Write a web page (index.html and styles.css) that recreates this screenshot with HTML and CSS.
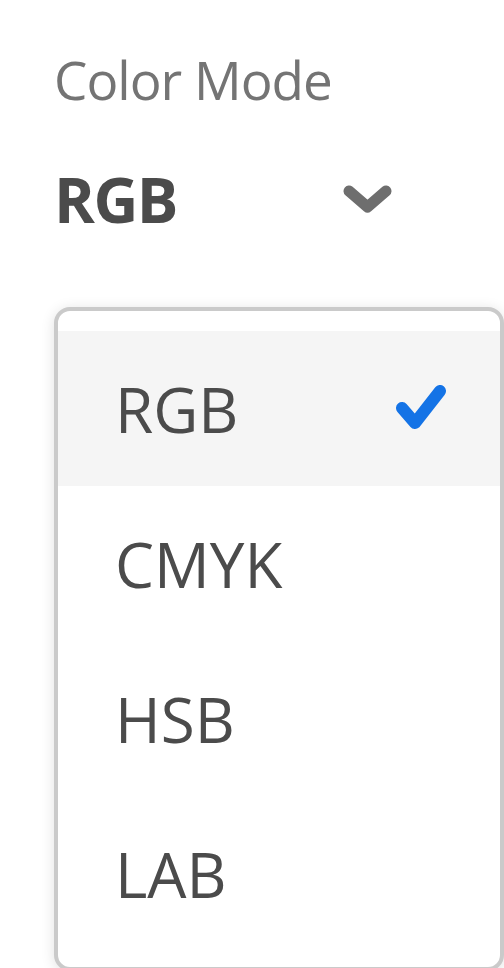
FILE: index.html
```html
<!DOCTYPE html>
<html lang="en">
<head>
<meta charset="utf-8">
<title>Color Mode</title>
<link rel="stylesheet" href="styles.css">
</head>
<body>
<div class="field">
  <div class="label">Color Mode</div>
  <div class="picker">
    <span class="picker-value">RGB</span>
    <svg class="chevron" width="49" height="28" viewBox="0 0 49 28" aria-hidden="true">
      <path d="M6 6 L24.5 22 L43 6" fill="none" stroke="#6e6e6e" stroke-width="11" stroke-linecap="round" stroke-linejoin="round"/>
    </svg>
  </div>
  <div class="popover">
    <ul class="menu">
      <li class="item selected">
        <span class="item-label">RGB</span>
        <svg class="check" width="50" height="48" viewBox="0 0 50 48" aria-hidden="true">
          <path d="M6 23 L19 38 L44 6" fill="none" stroke="#1473e6" stroke-width="12" stroke-linecap="round" stroke-linejoin="round"/>
        </svg>
      </li>
      <li class="item"><span class="item-label">CMYK</span></li>
      <li class="item"><span class="item-label">HSB</span></li>
      <li class="item"><span class="item-label">LAB</span></li>
    </ul>
  </div>
</div>
</body>
</html>
```
FILE: styles.css
```css
html, body {
  margin: 0;
  padding: 0;
  background: #ffffff;
  overflow: hidden;
}

body {
  width: 504px;
  height: 968px;
  font-family: "Open Sans", "Noto Sans", sans-serif;
}

.field {
  padding-top: 44px;
}

.label {
  margin-left: 54px;
  font-size: 53px;
  line-height: 72px;
  letter-spacing: -1px;
  color: #747474;
}

.picker {
  margin-left: 54px;
  width: 338px;
  height: 110px;
  display: flex;
  align-items: center;
  justify-content: space-between;
  margin-top: 28px;
}

.picker-value {
  font-size: 62px;
  font-weight: 700;
  color: #4b4b4b;
  line-height: 1;
  letter-spacing: -1.5px;
}

.chevron {
  display: block;
}

.popover {
  margin-top: 53px;
  margin-left: 54px;
  width: 450px;
  box-sizing: border-box;
  border: 4px solid #cacaca;
  border-radius: 16px;
  background: #ffffff;
  box-shadow: 0 2px 14px rgba(0, 0, 0, 0.12);
  padding: 20px 0 16px;
}

.menu {
  list-style: none;
  margin: 0;
  padding: 0;
}

.item {
  height: 155px;
  display: flex;
  align-items: center;
  justify-content: space-between;
  padding: 0 54px 0 57px;
  box-sizing: border-box;
  font-size: 62px;
  color: #4b4b4b;
}

.item.selected {
  background: #f5f5f5;
}

.check {
  display: block;
}
```
